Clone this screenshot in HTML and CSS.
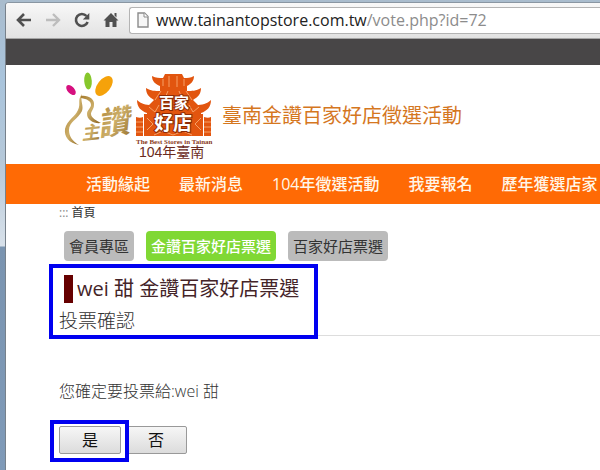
FILE: index.html
```html
<!DOCTYPE html>
<html lang="zh-Hant">
  <head>
    <meta charset="UTF-8" />
    <meta name="viewport" content="width=device-width, initial-scale=1.0" />
    <title>臺南金讚百家好店徵選活動</title>
    <link rel="stylesheet" href="styles.css">
  </head>
  <body>
    <div class="browser">
      <div class="toolbar">
        <button type="button" class="tool" aria-label="上一頁">
          <svg width="16" height="16" viewBox="0 0 16 16"><path d="M8 2L2 8l6 6M2.500 8H15" fill="none" stroke="#505050" stroke-width="2.600"/></svg>
        </button>
        <button type="button" class="tool" aria-label="下一頁" disabled>
          <svg width="16" height="16" viewBox="0 0 16 16"><path d="M8 2l6 6-6 6M13.500 8H1" fill="none" stroke="#bdbdbd" stroke-width="2.400"/></svg>
        </button>
        <button type="button" class="tool" aria-label="重新載入">
          <svg width="16" height="16" viewBox="0 0 16 16"><path d="M12.500 4A6 6 0 1 0 13.600 10" fill="none" stroke="#505050" stroke-width="2.600"/><path d="M15.300 1v6.500H8.800z" fill="#505050"/></svg>
        </button>
        <button type="button" class="tool" aria-label="首頁">
          <svg width="16" height="16" viewBox="0 0 16 16"><path d="M8 1l7.500 7.500H13.500V15H9.500v-5h-3v5H2.500V8.500H.500zM11.500 1h2v4.500l-2-2z" fill="#505050"/></svg>
        </button>
        <div class="address">
          <svg class="page-icon" width="12" height="16" viewBox="0 0 12 16"><path d="M1 1h6.500L11 4.500V15H1z" fill="#f6f6f6" stroke="#8c8c8c" stroke-width="1.400"/><path d="M7 1v4h4" fill="#fff" stroke="#8c8c8c"/></svg>
          <span class="url">www.tainantopstore.com.tw<span class="url-path">/vote.php?id=72</span></span>
        </div>
      </div>

      <div class="topbar"></div>

      <header class="header">
        <svg class="logo" width="150" height="90" viewBox="0 0 150 90" role="img" aria-label="百家好店">
          <defs>
            <linearGradient id="gold" x1="0" y1="0" x2="1" y2="1">
              <stop offset="0" stop-color="#a67c30"/>
              <stop offset=".5" stop-color="#ccae68"/>
              <stop offset="1" stop-color="#8a6220"/>
            </linearGradient>
          </defs>
          <ellipse cx="7" cy="19" rx="3.500" ry="6" fill="#d6107f" transform="rotate(-42 7 19)"/>
          <ellipse cx="24" cy="10" rx="3.800" ry="8.500" fill="#86c72c" transform="rotate(-4 24 10)"/>
          <ellipse cx="40" cy="15" rx="6.500" ry="11.500" fill="#f5a20a" transform="rotate(38 40 15)"/>
          <!-- hand -->
          <path d="M18 23c-5 6-1 10-4 16-3 7-11 10-13 19-1 8 4 14 14 16-7-4-10-9-10-15 0-8 9-11 13-19 2-5-2-10 0-17z" fill="url(#gold)"/>
          <path d="M17 25c7-1 14 3 13 9 0 4-3 6-3 9 0 4 6 7 10 9-7 1-14-3-14-9 0-4 4-6 4-9 0-4-4-6-10-7z" fill="url(#gold)"/>
          <text class="gold gold-small" x="18" y="69" transform="rotate(-6 18 69)">主</text>
          <text class="gold gold-large" x="35" y="65" transform="rotate(-8 35 65)">讚</text>
          <!-- gate tower -->
          <g class="roof">
            <path d="M88 5c4 2 7 2 11 2l2-4h17l2 4c4 0 6 0 10-2 0 5-3 8-7 10v5H96v-5c-5-2-8-5-8-10z"/>
            <path d="M82 17c5 3 9 3 14 3h27c5 0 9 0 14-3 0 6-3 9-8 12l5 5H85l5-5c-5-3-8-6-8-12z"/>
            <path d="M73 29c4 4 9 5 14 5h45c6 0 11-1 15-5 0 7-4 11-10 13v4H83v-4c-6-2-10-6-10-13z"/>
            <path d="M80 43h59v22H80z"/>
            <path d="M72 46c3 1 5 1 7 0v19h-7zM140 46c3 1 5 1 7 0v19h-7z"/>
          </g>
          <path class="lattice" d="M99 8v7M105 5v11M113 5v11M120 8v7M97 20l-6 9M104 20l-3 7M115 20l3 7M122 20l6 9M85 36l6 5 4-7M125 34l4 7 6-5M83 47l6 6-6 6M137 47l-6 6 6 6M90 64l9-4 10 4 10-4 9 4M72 51h7M72 56h7M72 61h7M140 51h7M140 56h7M140 61h7"/>
          <text class="roof-text" x="95" y="37">百家</text>
          <text class="roof-text roof-text-big" x="90" y="59">好店</text>
          <text class="logo-en" x="72" y="73">The Best Stores in Tainan</text>
          <text class="logo-year" x="75" y="86">104年臺南</text>
        </svg>
        <h1 class="site-title">臺南金讚百家好店徵選活動</h1>
      </header>

      <nav class="nav">
        <a href="#">活動緣起</a>
        <a href="#">最新消息</a>
        <a href="#">104年徵選活動</a>
        <a href="#">我要報名</a>
        <a href="#">歷年獲選店家</a>
      </nav>

      <main class="content">
        <div class="breadcrumb"><span class="dots">:::</span> <a href="#">首頁</a></div>
        <div class="tabs">
          <a class="tab" href="#">會員專區</a>
          <a class="tab active" href="#">金讚百家好店票選</a>
          <a class="tab" href="#">百家好店票選</a>
        </div>
        <div class="heading">
          <h2>wei 甜 金讚百家好店票選</h2>
          <h3>投票確認</h3>
          <div class="mark mark-heading"></div>
        </div>
        <form class="vote" onsubmit="return false">
          <p>您確定要投票給:wei 甜</p>
          <div class="actions">
            <button type="submit" class="btn">是</button>
            <button type="button" class="btn">否</button>
            <div class="mark mark-yes"></div>
          </div>
        </form>
      </main>
    </div>
  </body>
</html>
```

FILE: styles.css
```css
* {
  box-sizing: border-box;
}
body {
  margin: 0;
  padding: 2px 0 0 5px;
  min-height: 100vh;
  display: flex;
  background: linear-gradient(#a9bccd 0, #a9c4dc 80px, #b5c8d9 160px, #d8e1ea 246px, #7a94b0 247px, #7f9ab8 100%);
  font-family: "Open Sans", "Noto Sans CJK TC", sans-serif;
  color: #333;
}
a {
  color: inherit;
  text-decoration: none;
}
.browser {
  flex: 1;
  min-width: 0;
  overflow: hidden;
  border-left: 1px solid #77818b;
  border-top: 1px solid #8996a2;
  border-top-left-radius: 4px;
  background: #fff;
}

/* browser toolbar */
.toolbar {
  display: flex;
  align-items: center;
  height: 36px;
  padding: 0 0 1px 10px;
  border-bottom: 1px solid #a5a5a5;
  background: linear-gradient(#f8f8f8, #e2e2e2);
}
.tool {
  display: flex;
  margin-right: 13px;
  padding: 0;
  border: 0;
  background: none;
}
.tool:nth-of-type(4) {
  margin-right: 10px;
}
.address {
  display: flex;
  flex: 1;
  align-items: center;
  height: 27px;
  padding-left: 7px;
  border: 1px solid #b4b4b4;
  border-right: 0;
  border-radius: 3px 0 0 3px;
  background: #fff;
}
.url {
  margin-left: 7px;
  font-size: 16px;
  line-height: 24px;
  color: #222;
  white-space: nowrap;
}
.url-path {
  color: #8c8c8c;
}

/* site header */
.topbar {
  height: 26px;
  background: #484647;
}
.header {
  display: flex;
  height: 99px;
  padding: 6px 0 0 58px;
}
.logo {
  flex: none;
}
.site-title {
  margin: 30px 0 0 8px;
  font-size: 20px;
  font-weight: 400;
  line-height: 30px;
  color: #d5771f;
  white-space: nowrap;
}
.gold {
  fill: url(#gold);
  font-weight: 700;
  font-style: italic;
}
.gold-small {
  font-size: 18px;
}
.gold-large {
  font-size: 32px;
}
.roof {
  fill: #e2550f;
}
.lattice {
  fill: none;
  stroke: #f6a066;
  stroke-width: 1;
}
.roof-text {
  fill: #fff;
  stroke: #8c2c08;
  stroke-width: 2;
  paint-order: stroke;
  font-size: 15px;
  font-weight: 700;
}
.roof-text-big {
  font-size: 19px;
}
.logo-en {
  fill: #8a3a1c;
  font-family: "Liberation Serif", serif;
  font-size: 7px;
  font-weight: 700;
}
.logo-year {
  fill: #6b2b1d;
  font-family: "Liberation Sans", "Noto Sans CJK TC", sans-serif;
  font-size: 14px;
}
.nav {
  display: flex;
  gap: 29px;
  height: 40px;
  padding-left: 80px;
  background: #ff6a05;
  color: #fff6e8;
  font-size: 16px;
  font-weight: 500;
  line-height: 40px;
  white-space: nowrap;
}

/* page content */
.content {
  padding-left: 53px;
}
.breadcrumb {
  font-size: 12px;
  line-height: 18px;
}
.dots {
  color: #888;
}
.tabs {
  display: flex;
  gap: 12px;
  margin: 9px 0 0 5px;
}
.tab {
  padding: 0 5px;
  border-radius: 4px;
  background: #bbb;
  font-size: 15px;
  line-height: 30px;
  white-space: nowrap;
}
.tab.active {
  background: #80d834;
  color: #fff;
  font-weight: 500;
}
.heading {
  position: relative;
  padding-top: 14px;
  border-bottom: 1px solid #ddd;
}
.heading h2 {
  margin: 0 0 0 5px;
  padding-left: 4px;
  border-left: 9px solid #600;
  font-size: 20px;
  font-weight: 400;
  line-height: 28px;
  color: #442428;
}
.heading h3 {
  margin: 4px 0 0;
  font-size: 19px;
  font-weight: 300;
  line-height: 28px;
}
.vote p {
  margin: 43px 0 0;
  font-size: 16px;
  font-weight: 300;
  line-height: 24px;
}
.actions {
  position: relative;
  display: flex;
  gap: 4px;
  margin-top: 23px;
}
.btn {
  width: 62px;
  height: 28px;
  padding: 0;
  border: 1px solid #999;
  border-radius: 2px;
  background: linear-gradient(#f6f6f6, #dcdcdc);
  font-family: inherit;
  font-size: 16px;
  line-height: 24px;
  color: #111;
}

/* blue highlight frames over the page */
.mark {
  position: absolute;
  border: 4px solid #0000f0;
  pointer-events: none;
}
.mark-heading {
  top: 3px;
  left: -10px;
  width: 269px;
  height: 75px;
}
.mark-yes {
  top: -6px;
  left: -9px;
  width: 79px;
  height: 42px;
}
```
